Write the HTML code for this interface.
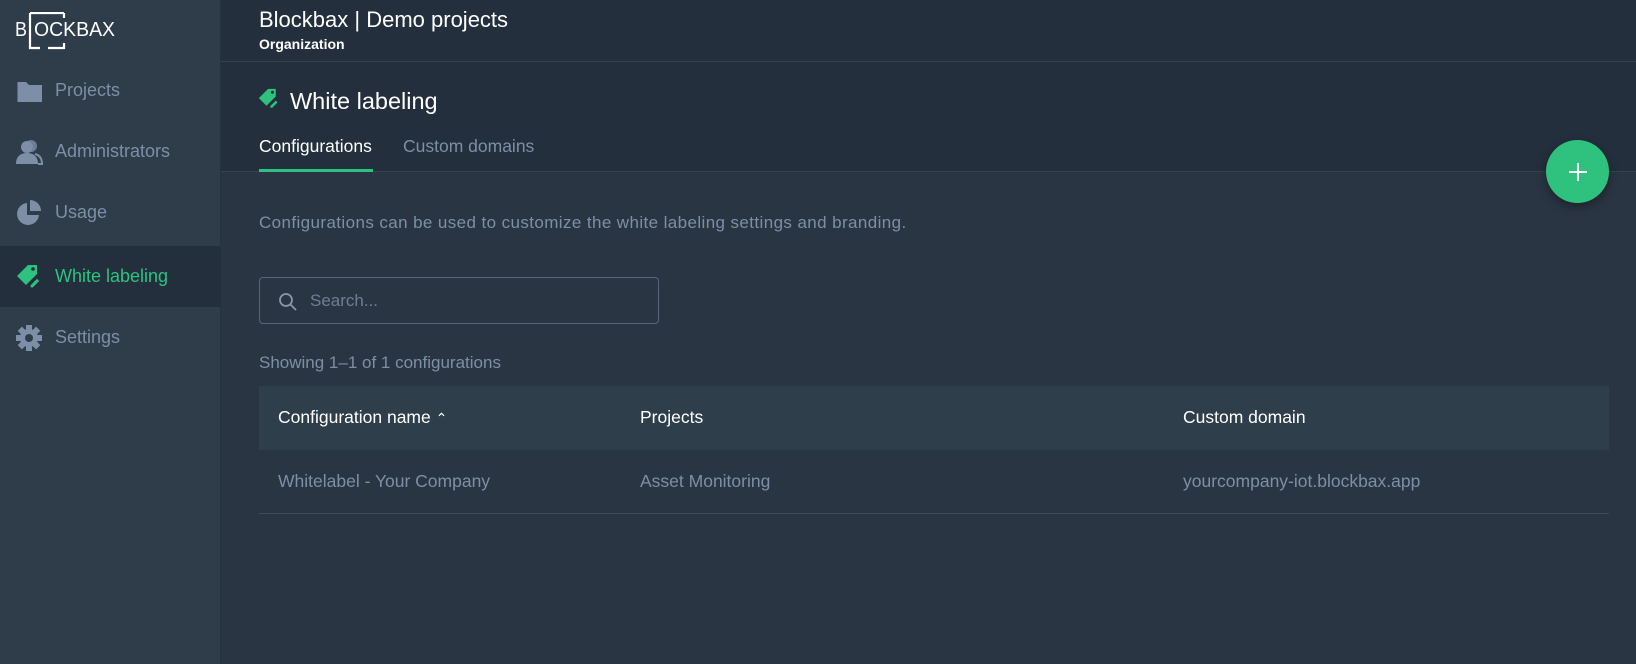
<!DOCTYPE html>
<html><head><meta charset="utf-8"><style>
*{margin:0;padding:0;box-sizing:border-box}
body{width:1636px;height:664px;overflow:hidden;background:#2a3543;font-family:"Liberation Sans",sans-serif;position:relative}
.side{position:absolute;left:0;top:0;width:221px;height:664px;background:#2f3d4b;border-right:1px solid #26313d}
.item{position:absolute;left:0;width:221px;height:61px;display:flex;align-items:center;color:#7d8fa6;font-size:18px}
.item svg{position:absolute;left:16px}
.item span{position:absolute;left:55px}
.item.act{background:#232f3c;color:#2ec27e}
.top{position:absolute;left:221px;top:0;right:0;height:172px;background:#232f3c}
.hl{position:absolute;left:221px;right:0;top:61px;height:1px;background:#35424f}
.hl2{position:absolute;left:221px;right:0;top:171px;height:1px;background:#35424f}
.t1{position:absolute;left:259px;top:7px;color:#fff;font-size:22px}
.t2{position:absolute;left:259px;top:36px;color:#fff;font-size:14px;font-weight:bold}
.t3{position:absolute;left:290px;top:88px;color:#fff;font-size:23.5px}
.tab{position:absolute;top:136px;font-size:17.5px}
.ul{position:absolute;left:259px;top:169px;width:114px;height:3px;background:#2ec27e}
.fab{position:absolute;left:1546px;top:140px;width:63px;height:63px;border-radius:50%;background:#2ec27e;box-shadow:0 4px 10px rgba(0,0,0,.35)}
.fab:before{content:"";position:absolute;left:23px;top:31px;width:18px;height:2px;background:#fff}
.fab:after{content:"";position:absolute;left:31px;top:23px;width:2px;height:18px;background:#fff}
.desc{position:absolute;left:259px;top:213px;color:#7d8fa6;font-size:17px;letter-spacing:0.4px}
.search{position:absolute;left:259px;top:277px;width:400px;height:47px;border:1px solid #55657a;border-radius:4px}
.search span{position:absolute;left:50px;top:13px;color:#6d7e93;font-size:17px}
.show{position:absolute;left:259px;top:353px;color:#7d8fa6;font-size:17px}
.th{position:absolute;left:259px;top:386px;width:1350px;height:64px;background:#2f3e4b}
.c{position:absolute;font-size:17.5px}
.h{color:#fff;top:407px}
.r{color:#7d8fa6;top:471px}
.line{position:absolute;left:259px;top:513px;width:1350px;height:1px;background:#3e4b5a}
</style></head><body>
<div class="side">
 <svg style="position:absolute;left:14px;top:12px" width="104" height="38" viewBox="0 0 104 38">
  <text x="1" y="24" fill="#fff" font-family="Liberation Sans" font-size="20" textLength="12" lengthAdjust="spacingAndGlyphs">B</text>
  <text x="20" y="24" fill="#fff" font-family="Liberation Sans" font-size="20" textLength="81" lengthAdjust="spacingAndGlyphs">OCKBAX</text>
  <path d="M16 1h34M16 1v35h10M34 36h16v-5M50 1v5" stroke="#fff" stroke-width="2.2" fill="none"/>
 </svg>
 <div class="item" style="top:60px"><svg width="27" height="24" viewBox="0 0 27 24"><path d="M1 3h9l3 3h13v17H1z" fill="#7d8fa6"/><path d="M1 3v20" stroke="#2f3d4b" stroke-width="1"/></svg><span>Projects</span></div>
 <div class="item" style="top:121px"><svg width="27" height="26" viewBox="0 0 27 26"><circle cx="15" cy="7" r="6" fill="#6d7e93"/><circle cx="11" cy="8" r="6" fill="#7d8fa6"/><path d="M0 25c0-8 5-11 11-11s11 3 11 11z" fill="#7d8fa6"/><path d="M22 25h4c0-6-3-9-7-10" fill="none" stroke="#7d8fa6" stroke-width="2"/></svg><span>Administrators</span></div>
 <div class="item" style="top:182px"><svg width="26" height="26" viewBox="0 0 26 26"><path d="M11 3a11 11 0 1 0 12 12H11z" fill="#7d8fa6"/><path d="M14 0a11 11 0 0 1 11 11H14z" fill="#7d8fa6"/></svg><span>Usage</span></div>
 <div class="item act" style="top:246px"><svg width="26" height="26" viewBox="0 0 26 26"><path d="M12 1h9v9L10 21 1 12z" fill="#2ec27e"/><circle cx="17" cy="5" r="1.8" fill="#232f3c"/><path d="M21 14l3 3-7 7h-3v-3z" fill="#2ec27e" stroke="#232f3c" stroke-width="1.2"/></svg><span>White labeling</span></div>
 <div class="item" style="top:307px"><svg width="26" height="26" viewBox="0 0 26 26"><g fill="#7d8fa6"><circle cx="13" cy="13" r="9"/><rect x="10" y="0" width="6" height="26"/><rect x="0" y="10" width="26" height="6"/><rect x="10" y="0" width="6" height="26" transform="rotate(45 13 13)"/><rect x="10" y="0" width="6" height="26" transform="rotate(-45 13 13)"/></g><circle cx="13" cy="13" r="4" fill="#2f3d4b"/></svg><span>Settings</span></div>
</div>
<div class="top"></div>
<div class="hl"></div><div class="hl2"></div>
<div class="t1">Blockbax | Demo projects</div>
<div class="t2">Organization</div>
<svg style="position:absolute;left:258px;top:88px" width="22" height="22" viewBox="0 0 26 26"><path d="M12 1h9v9L10 21 1 12z" fill="#2ec27e"/><circle cx="17" cy="5" r="1.8" fill="#232f3c"/><path d="M21 14l3 3-7 7h-3v-3z" fill="#2ec27e" stroke="#232f3c" stroke-width="1.2"/></svg>
<div class="t3">White labeling</div>
<div class="tab" style="left:259px;color:#fff">Configurations</div>
<div class="tab" style="left:403px;color:#7d8fa6">Custom domains</div>
<div class="ul"></div>
<div class="fab"></div>
<div class="desc">Configurations can be used to customize the white labeling settings and branding.</div>
<div class="search"><svg style="position:absolute;left:18px;top:14px" width="20" height="20" viewBox="0 0 20 20"><circle cx="8" cy="8" r="6" fill="none" stroke="#8797aa" stroke-width="1.8"/><path d="M12.5 12.5L18 18" stroke="#8797aa" stroke-width="1.8"/></svg><span>Search...</span></div>
<div class="show">Showing 1–1 of 1 configurations</div>
<div class="th"></div>
<div class="c h" style="left:278px">Configuration name <span style="font-size:14px">&#x2303;</span></div>
<div class="c h" style="left:640px">Projects</div>
<div class="c h" style="left:1183px">Custom domain</div>
<div class="c r" style="left:278px">Whitelabel - Your Company</div>
<div class="c r" style="left:640px">Asset Monitoring</div>
<div class="c r" style="left:1183px">yourcompany-iot.blockbax.app</div>
<div class="line"></div>
</body></html>
